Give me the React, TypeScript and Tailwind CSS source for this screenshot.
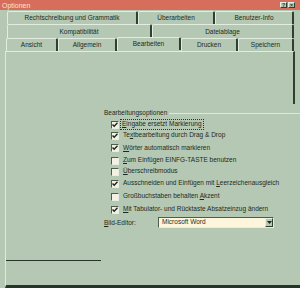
import React from "react";

const font = { fontFamily: '"Liberation Sans", Arial, sans-serif' };

const Key: React.FC<{ children: React.ReactNode }> = ({ children }) => (
  <span className="underline underline-offset-[1px]">{children}</span>
);

const Check: React.FC<{ on: boolean }> = ({ on }) => (
  <div className="w-[8px] h-[8px] shrink-0 bg-[#f4f1e4] border-t border-l border-[#4d5d4b] border-r-[#e6eee2] border-b-[#e6eee2] border-r border-b flex items-center justify-center">
    {on && (
      <svg width="6" height="6" viewBox="0 0 6 6">
        <path d="M0.5 2.5 L2.2 4.3 L5.5 0.8" stroke="#1b261b" strokeWidth="1.4" fill="none" />
      </svg>
    )}
  </div>
);

const Tab: React.FC<{ w: string; label: string; active?: boolean }> = ({ w, label, active }) => (
  <div
    className={`${w} h-full flex items-center justify-center border-t border-l border-[#e3ece0] border-r-2 border-r-[#2f402f] rounded-t-[2px] text-[#1c2a1c] ${
      active ? "-mt-[1px] h-[14px]" : ""
    }`}
  >
    {label}
  </div>
);

const rows: { h: string; on: boolean; label: React.ReactNode; focus?: boolean }[] = [
  { h: "h-[11px]", on: true, focus: true, label: <><Key>E</Key>ingabe ersetzt Markierung</> },
  { h: "h-[11px]", on: true, label: <>Te<Key>x</Key>tbearbeitung durch Drag &amp; Drop</> },
  { h: "h-[14px]", on: true, label: <><Key>W</Key>örter automatisch markieren</> },
  { h: "h-[11px]", on: false, label: <><Key>Z</Key>um Einfügen EINFG-TASTE benutzen</> },
  { h: "h-[11px]", on: false, label: <><Key>Ü</Key>berschreibmodus</> },
  { h: "h-[13px]", on: true, label: <>Ausschneiden und Einfügen mit <Key>L</Key>eerzeichenausgleich</> },
  { h: "h-[13px]", on: false, label: <>Großbuchstaben behalten <Key>A</Key>kzent</> },
  { h: "h-[13px]", on: true, label: <><Key>M</Key>it Tabulator- und Rücktaste Absatzeinzug ändern</> },
];

export default function App() {
  return (
    <div style={font} className="w-[300px] h-[288px] bg-[#b5c8b4] overflow-hidden text-[6.5px] text-[#1c2a1c] flex flex-col">
      {/* title bar */}
      <div className="h-[10px] shrink-0 bg-[#d76e5c] flex items-center justify-between pl-[2px] pr-[5px]">
        <span className="text-[#f6e2d8] leading-none text-[7px]">Optionen</span>
        <div className="flex gap-[1px]">
          <div className="w-[7px] h-[6px] bg-[#b5c8b4] border-t border-l border-[#e8efe4] border-r border-b border-r-[#2f402f] border-b-[#2f402f] flex items-center justify-center text-[5px] font-bold leading-none">?</div>
          <div className="w-[7px] h-[6px] bg-[#b5c8b4] border-t border-l border-[#e8efe4] border-r border-b border-r-[#2f402f] border-b-[#2f402f] flex items-center justify-center text-[5px] font-bold leading-none">×</div>
        </div>
      </div>

      {/* tab rows */}
      <div className="h-[13px] mt-[1px] shrink-0 flex pl-[7px]">
        <Tab w="w-[131px]" label="Rechtschreibung und Grammatik" />
        <Tab w="w-[77px]" label="Überarbeiten" />
        <Tab w="w-[79px]" label="Benutzer-Info" />
      </div>
      <div className="h-[14px] shrink-0 flex pl-[7px]">
        <Tab w="w-[145px]" label="Kompatibilität" />
        <Tab w="w-[142px]" label="Dateiablage" />
      </div>
      <div className="h-[13px] shrink-0 flex pl-[6px]">
        <Tab w="w-[52px]" label="Ansicht" />
        <Tab w="w-[59px]" label="Allgemein" />
        <Tab w="w-[64px]" label="Bearbeiten" active />
        <Tab w="w-[57px]" label="Drucken" />
        <Tab w="w-[56px]" label="Speichern" />
      </div>

      {/* page */}
      <div className="flex-1 ml-[5px] border-l border-[#dfe9dc] border-b-[3px] border-b-[#26342a] flex flex-col">
        <div className="h-[53px] shrink-0 w-[289px] border-t border-[#e3ece0] border-r-2 border-r-[#2f402f]" />
        <div className="h-[4px] shrink-0" />

        {/* group */}
        <div className="pl-[98px]">
          <div className="h-[10px] flex items-center">
            <span className="pr-[2px]">Bearbeitungsoptionen</span>
            <div className="flex-1 h-px bg-[#dfe8dc]" />
          </div>
          <div className="pl-[7px] pt-[1px]">
            {rows.map((r, i) => (
              <div key={i} className={`${r.h} flex items-center gap-[2px]`}>
                <Check on={r.on} />
                <span className={`leading-none px-[1px] py-[1px] ${r.focus ? "outline outline-1 outline-dotted outline-[#2a3a2a]" : "border border-transparent"}`}>
                  {r.label}
                </span>
              </div>
            ))}
          </div>
          <div className="h-[13px] flex items-center">
            <span className="w-[54px]"><Key>B</Key>ild-Editor:</span>
            <div className="w-[116px] h-[11px] bg-[#fdf6dc] border-t border-l border-[#4d5d4b] border-r border-b border-r-[#e6eee2] border-b-[#e6eee2] flex items-center">
              <span className="flex-1 pl-[3px] leading-none">Microsoft Word</span>
              <div className="w-[8px] h-[9px] bg-[#b5c8b4] border-t border-l border-[#e8efe4] border-r border-b border-r-[#2f402f] border-b-[#2f402f] flex items-center justify-center">
                <svg width="5" height="3" viewBox="0 0 5 3">
                  <path d="M0 0 H5 L2.5 3 Z" fill="#1c2a1c" />
                </svg>
              </div>
            </div>
          </div>
        </div>

        <div className="h-[31px] shrink-0" />
        <div className="w-[95px] h-px bg-[#26342a]" />
      </div>
    </div>
  );
}
